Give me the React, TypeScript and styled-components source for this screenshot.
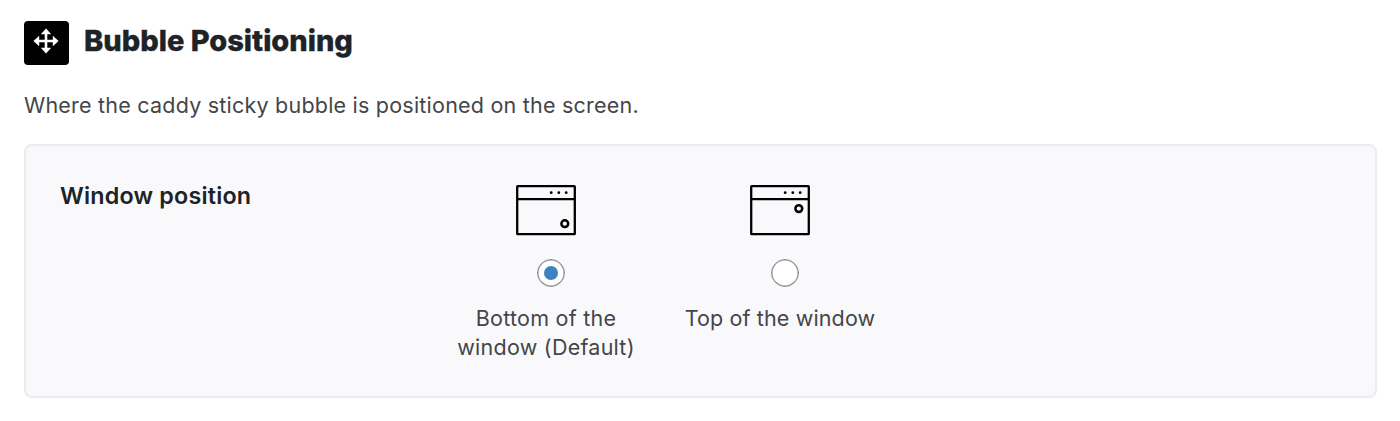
import React, { useState } from 'react';
import styled, { createGlobalStyle } from 'styled-components';

const GlobalStyle = createGlobalStyle`
  *, *::before, *::after { box-sizing: border-box; }
  body {
    margin: 0;
    background: #fff;
    color: #434649;
    font-family: Inter, "Liberation Sans", sans-serif;
    font-size: 21.5px;
    line-height: 29px;
  }
`;

const Page = styled.main`
  padding: 21px 23px 23px 24px;
`;

const Header = styled.header`
  display: flex;
  align-items: flex-start;
  gap: 15px;
`;

const HeaderIcon = styled.span`
  display: flex;
  justify-content: center;
  width: 45px;
  height: 44px;
  padding: 7px 1px 0 0;
  border-radius: 4px;
  background: #000;
`;

const Title = styled.h2`
  margin: 0;
  color: #1d2327;
  font-size: 29px;
  font-weight: 800;
  line-height: 40px;
  letter-spacing: 0;
  -webkit-text-stroke: 0.35px #1d2327;
  white-space: nowrap;
`;

const Description = styled.p`
  margin: 26px 0 0;
  letter-spacing: 0.22px;
  white-space: nowrap;
`;

const Panel = styled.section`
  display: flex;
  height: 254px;
  margin-top: 24px;
  padding: 35px 34px;
  border: 2px solid #ebecee;
  border-radius: 8px;
  background: #f9f9fb;
`;

const FieldLabel = styled.h3`
  flex: none;
  width: 391px;
  margin: 0;
  color: #1d2327;
  font-size: 23.3px;
  font-weight: 600;
  line-height: 30px;
  letter-spacing: 0.2px;
  white-space: nowrap;
`;

const Options = styled.div`
  display: flex;
  align-items: flex-start;
  gap: 44px;
`;

const Option = styled.label`
  display: flex;
  flex-direction: column;
  align-items: center;
  width: 190px;
  text-align: center;
`;

const WindowDrawing = styled.svg`
  display: block;
  flex: none;
  margin-top: 4px;
`;

const Radio = styled.input`
  appearance: none;
  display: grid;
  place-items: center;
  flex: none;
  width: 28px;
  height: 28px;
  margin: 23px 0 17px 10px;
  border: 1px solid #8c8f94;
  border-radius: 50%;
  background: #fff;
  box-shadow: inset 0 0 0 0.5px #8c8f94;

  &:checked::before {
    content: '';
    width: 14px;
    height: 14px;
    border-radius: 50%;
    background: #3b82c0;
  }
`;

const OptionText = styled.span<{ $spacing: string }>`
  letter-spacing: ${(p) => p.$spacing};
  white-space: pre;
`;

const MoveIcon = () => (
  <svg width="26" height="26" viewBox="0 0 26 26" fill="#fff">
    <path d="M13 0.4L18.2 6.2H14.3V11.7H19.8V7.8L25.6 13L19.8 18.2V14.3H14.3V19.8H18.2L13 25.6L7.8 19.8H11.7V14.3H6.2V18.2L0.4 13L6.2 7.8V11.7H11.7V6.2H7.8Z" />
  </svg>
);

const WindowIcon = ({ bubbleX, bubbleY }: { bubbleX: number; bubbleY: number }) => (
  <WindowDrawing width="60" height="51" viewBox="0 0 60 51" fill="none" stroke="#000" strokeWidth="2.3">
    <rect x="1.2" y="1.2" width="57.6" height="48" rx="0.5" />
    <path d="M1.2 14.1H59" />
    <circle cx={bubbleX} cy={bubbleY} r="3.4" strokeWidth="2.5" />
    <g fill="#000" stroke="none">
      <circle cx="35.2" cy="7.7" r="1.4" />
      <circle cx="42.8" cy="7.7" r="1.4" />
      <circle cx="50.2" cy="7.7" r="1.4" />
    </g>
  </WindowDrawing>
);

const positions = [
  { id: 'bottom', text: 'Bottom of the\nwindow (Default)', bubbleX: 48.8, bubbleY: 38.7, spacing: '0.25px' },
  { id: 'top', text: 'Top of the window', bubbleX: 48.8, bubbleY: 23.6, spacing: '0.13px' },
];

export default function App() {
  const [selected, setSelected] = useState('bottom');
  return (
    <>
      <GlobalStyle />
      <Page>
        <Header>
          <HeaderIcon><MoveIcon /></HeaderIcon>
          <Title>Bubble Positioning</Title>
        </Header>
        <Description>Where the caddy sticky bubble is positioned on the screen.</Description>
        <Panel>
          <FieldLabel>Window position</FieldLabel>
          <Options>
            {positions.map((p) => (
              <Option key={p.id}>
                <WindowIcon bubbleX={p.bubbleX} bubbleY={p.bubbleY} />
                <Radio type="radio" name="position" checked={selected === p.id} onChange={() => setSelected(p.id)} />
                <OptionText $spacing={p.spacing}>{p.text}</OptionText>
              </Option>
            ))}
          </Options>
        </Panel>
      </Page>
    </>
  );
}
